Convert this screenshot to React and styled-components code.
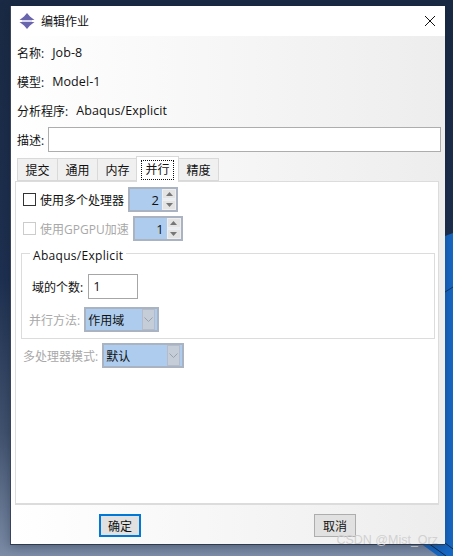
import React from 'react';
import styled, { createGlobalStyle } from 'styled-components';

const GlobalStyle = createGlobalStyle`
  html, body {
    margin: 0;
    padding: 0;
  }
  body {
    font-family: "Open Sans", "Noto Sans CJK SC", sans-serif;
    font-size: 12px;
    color: #111;
  }
`;

const Desktop = styled.div`
  position: relative;
  width: 453px;
  height: 556px;
  box-sizing: border-box;
  padding: 6px 8px 12px 10px;
  overflow: hidden;
  background: linear-gradient(180deg, #1a2a44 0%, #1e3050 50%, #41536f 78%, #7c8ca7 100%);
`;

const Wallpaper = styled.svg`
  position: absolute;
  top: 0;
  left: 0;
`;

const Window = styled.div`
  position: relative;
  height: 100%;
  display: flex;
  flex-direction: column;
  border-left: 1px solid #3a4559;
  border-bottom: 1px solid #2f3a4d;
  box-shadow: 0 2px 10px rgba(15, 25, 45, 0.35);
  background: linear-gradient(90deg, #fff 0%, #ededed 100%);
`;

const TitleBar = styled.div`
  height: 30px;
  flex: none;
  display: flex;
  align-items: center;
  padding: 0 10px 0 8px;
  gap: 6px;
  background: #fff;
`;

const Title = styled.span`
  flex: 1;
  font-size: 12px;
`;

const Content = styled.div`
  flex: 1;
  display: flex;
  flex-direction: column;
  padding: 2px 4px 0 4px;
`;

const InfoRow = styled.div`
  height: 29px;
  display: flex;
  align-items: center;
  gap: 8px;
  padding-left: 2px;
  white-space: nowrap;
`;

const InfoValue = styled.span`
  font-size: 12.5px;
  letter-spacing: 0.1px;
`;

const DescRow = styled.div`
  display: flex;
  align-items: center;
  gap: 4px;
  height: 25px;
  margin-top: 2px;
  padding-left: 2px;
`;

const DescInput = styled.div`
  flex: 1;
  height: 25px;
  box-sizing: border-box;
  background: #fff;
  border: 1px solid #adadad;
`;

const Tabs = styled.div`
  display: flex;
  align-items: flex-end;
  height: 25px;
  margin: 4px 0 0 2px;
  position: relative;
  z-index: 1;
`;

const Tab = styled.div`
  box-sizing: border-box;
  width: ${(props) => (props.$active ? 43 : 41)}px;
  height: ${(props) => (props.$active ? 26 : 23)}px;
  margin-bottom: ${(props) => (props.$active ? -1 : 0)}px;
  margin-left: ${(props) => (props.$active ? -1 : 0)}px;
  margin-right: -1px;
  display: flex;
  align-items: center;
  justify-content: center;
  background: ${(props) => (props.$active ? '#fff' : '#f0f0f0')};
  border: 1px solid #d9d9d9;
  border-bottom: ${(props) => (props.$active ? 'none' : '1px solid #d9d9d9')};
  z-index: ${(props) => (props.$active ? 2 : 1)};
`;

const FocusLabel = styled.span`
  display: block;
  padding: 1px 3px;
  line-height: 16px;
  outline: 1px dotted #111;
`;

const Panel = styled.div`
  box-sizing: border-box;
  height: 324px;
  margin: 0 2px 0 0;
  padding: 5px 4px 0 7px;
  display: flex;
  flex-direction: column;
  align-items: flex-start;
  background: #fff;
  border: 1px solid #dcdcdc;
  border-bottom-width: 2px;
`;

const OptionRow = styled.div`
  display: flex;
  align-items: center;
  height: 25px;
  margin-bottom: 4px;
  color: ${(props) => (props.$disabled ? '#a8a8a8' : '#111')};
`;

const Check = styled.span`
  box-sizing: border-box;
  width: 13px;
  height: 13px;
  margin-right: 4px;
  background: #fff;
  border: 1px solid ${(props) => (props.$disabled ? '#cccccc' : '#333')};
`;

const Spin = styled.div`
  box-sizing: border-box;
  width: 50px;
  height: 25px;
  margin-left: 4px;
  display: flex;
  align-items: center;
  justify-content: flex-end;
  background: #aecdee;
  border: 2px solid #a9b3c2;
  color: #111;
  font-size: 13px;
`;

const SpinValue = styled.span`
  padding-right: 3px;
`;

const SpinButtons = styled.div`
  width: 14px;
  height: 21px;
  display: flex;
  flex-direction: column;
  gap: 1px;
  background: #e6eef7;
`;

const SpinButton = styled.div`
  flex: 1;
  display: flex;
  align-items: center;
  justify-content: center;
  background: #e4e4e4;
  border: 1px solid #efefef;
`;

const Group = styled.fieldset`
  box-sizing: border-box;
  width: 414px;
  height: 89px;
  margin: 5px 0 0 -2px;
  padding: 0 0 0 7px;
  border: 1px solid #dcdcdc;
  display: flex;
  flex-direction: column;
  align-items: flex-start;
`;

const Legend = styled.legend`
  margin-left: 1px;
  padding: 0 3px;
  line-height: 6px;
  height: 6px;
  font-size: 12px;
  color: #111;
  letter-spacing: 0.3px;
  transform: translateY(3px);
`;

const FieldRow = styled.div`
  display: flex;
  align-items: center;
  height: 25px;
  margin-top: ${(props) => props.$top}px;
  margin-left: ${(props) => props.$left}px;
  gap: 4px;
  color: ${(props) => (props.$disabled ? '#a8a8a8' : '#111')};
`;

const NumberInput = styled.div`
  box-sizing: border-box;
  width: 50px;
  height: 25px;
  padding-left: 4px;
  line-height: 23px;
  font-size: 13px;
  background: #fff;
  border: 1px solid #a6a6a6;
  margin-left: 1px;
`;

const Select = styled.div`
  box-sizing: border-box;
  width: ${(props) => props.$width}px;
  height: 25px;
  padding: 0 2px 0 2px;
  display: flex;
  align-items: center;
  justify-content: space-between;
  background: #aecdee;
  border: 2px solid #a9b3c2;
  color: #111;
`;

const SelectArrow = styled.div`
  width: 11px;
  height: 19px;
  display: flex;
  align-items: center;
  justify-content: center;
  background: #c4cdd8;
  border: 1px solid #b3bcc8;
`;

const Footer = styled.div`
  flex: 1;
  display: flex;
  align-items: flex-start;
  padding: 9px 0 0 84px;
`;

const Button = styled.div`
  box-sizing: border-box;
  width: 42px;
  height: 23px;
  display: flex;
  align-items: center;
  justify-content: center;
  background: #e1e1e1;
  border: ${(props) => (props.$default ? '2px solid #0078d7' : '1px solid #adadad')};
  margin-right: ${(props) => props.$gap || 0}px;
`;

const Watermark = styled.div`
  position: absolute;
  right: 15px;
  bottom: 9px;
  font-family: "Liberation Sans", sans-serif;
  font-size: 12.5px;
  color: rgba(205, 205, 205, 0.9);
  white-space: nowrap;
`;

const Up = () => (
  <svg width="7" height="4" viewBox="0 0 7 4">
    <path d="M3.5 0 7 4H0z" fill="#777" />
  </svg>
);

const Down = () => (
  <svg width="7" height="4" viewBox="0 0 7 4">
    <path d="M0 0h7L3.5 4z" fill="#777" />
  </svg>
);

const Chevron = () => (
  <svg width="9" height="5" viewBox="0 0 9 5">
    <path d="M0.5 0.5 4.5 4.5 8.5 0.5" fill="none" stroke="#9aa3ad" />
  </svg>
);

const AppIcon = () => (
  <svg width="16" height="16" viewBox="0 0 16 16">
    <path d="M8 0 11 3.5 15.5 7H.5L5 3.5z" fill="#6a66ad" />
    <path d="M.5 9h15L11 12.5 8 16 5 12.5z" fill="#6a66ad" />
    <path d="M3 7h10v2H3z" fill="#d9d8ee" />
  </svg>
);

const CloseIcon = () => (
  <svg width="10" height="10" viewBox="0 0 10 10">
    <path d="M0 0 10 10M10 0 0 10" stroke="#111" strokeWidth="1" />
  </svg>
);

const SpinBox = ({ value }) => (
  <Spin>
    <SpinValue>{value}</SpinValue>
    <SpinButtons>
      <SpinButton><Up /></SpinButton>
      <SpinButton><Down /></SpinButton>
    </SpinButtons>
  </Spin>
);

const App = () => {
  return (
    <Desktop>
      <GlobalStyle />
      <Wallpaper width="453" height="556" viewBox="0 0 453 556">
        <path d="M445 236 453 233V556H445z" fill="#1768c4" />
        <path d="M445 292 453 287" stroke="#123a6e" strokeWidth="1" />
        <path d="M420 543H445L453 549V556H438z" fill="#1768c4" />
        <path d="M428 543 446 556M445 543 453 549" stroke="#14294a" strokeWidth="1" />
      </Wallpaper>
      <Window>
        <TitleBar>
          <AppIcon />
          <Title>编辑作业</Title>
          <CloseIcon />
        </TitleBar>
        <Content>
          <InfoRow><span>名称:</span><InfoValue>Job-8</InfoValue></InfoRow>
          <InfoRow><span>模型:</span><InfoValue>Model-1</InfoValue></InfoRow>
          <InfoRow><span>分析程序:</span><InfoValue>Abaqus/Explicit</InfoValue></InfoRow>
          <DescRow>
            <span>描述:</span>
            <DescInput />
          </DescRow>
          <Tabs>
            <Tab>提交</Tab>
            <Tab>通用</Tab>
            <Tab>内存</Tab>
            <Tab $active><FocusLabel>并行</FocusLabel></Tab>
            <Tab>精度</Tab>
          </Tabs>
          <Panel>
            <OptionRow>
              <Check />
              使用多个处理器
              <SpinBox value="2" />
            </OptionRow>
            <OptionRow $disabled>
              <Check $disabled />
              使用GPGPU加速
              <SpinBox value="1" />
            </OptionRow>
            <Group>
              <Legend>Abaqus/Explicit</Legend>
              <FieldRow $top={18} $left={3}>
                域的个数:
                <NumberInput>1</NumberInput>
              </FieldRow>
              <FieldRow $top={8} $left={0} $disabled>
                并行方法:
                <Select $width={75}>
                  作用域
                  <SelectArrow><Chevron /></SelectArrow>
                </Select>
              </FieldRow>
            </Group>
            <FieldRow $top={4} $left={0} $disabled>
              多处理器模式:
              <Select $width={82}>
                默认
                <SelectArrow><Chevron /></SelectArrow>
              </Select>
            </FieldRow>
          </Panel>
          <Footer>
            <Button $default $gap={173}>确定</Button>
            <Button>取消</Button>
          </Footer>
        </Content>
      </Window>
      <Watermark>CSDN @Mist_Orz</Watermark>
    </Desktop>
  );
};

export default App;
